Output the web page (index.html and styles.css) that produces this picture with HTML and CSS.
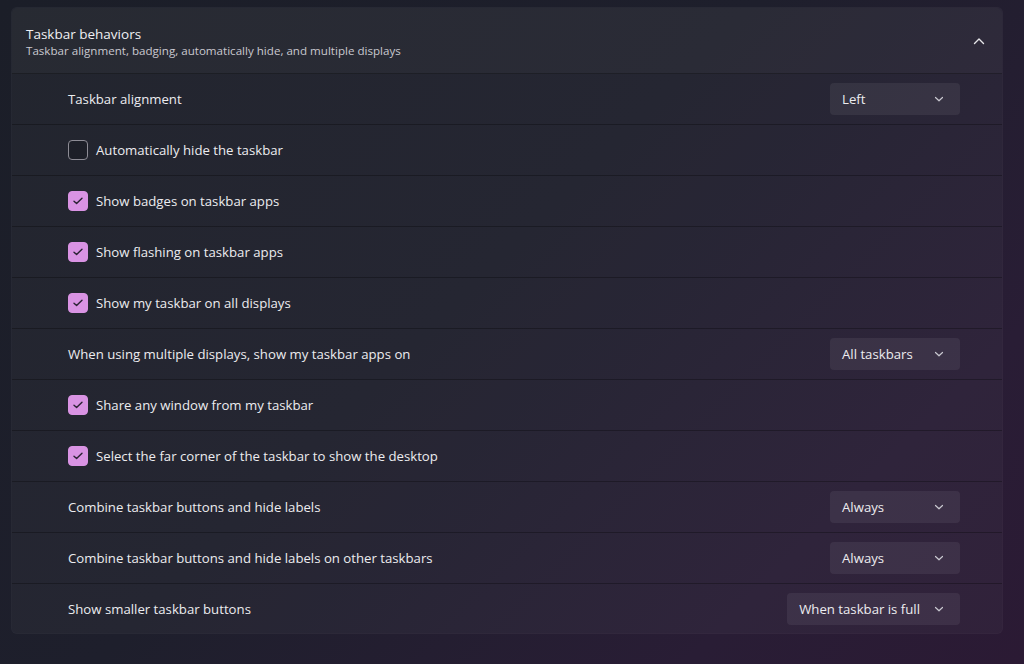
FILE: index.html
```html
<!DOCTYPE html>
<html>
<head>
<meta charset="utf-8">
<link rel="stylesheet" href="styles.css">
</head>
<body>
<div class="page">
  <section class="card">
    <header class="card-head">
      <div class="head-text">
        <div class="title">Taskbar behaviors</div>
        <div class="subtitle">Taskbar alignment, badging, automatically hide, and multiple displays</div>
      </div>
      <svg class="chev-up" width="12" height="8" viewBox="0 0 12 8"><path d="M1.5 6.5 L6 2 L10.5 6.5" fill="none" stroke="#e6e6e9" stroke-width="1.4" stroke-linecap="round" stroke-linejoin="round"/></svg>
    </header>

    <div class="row">
      <span class="label">Taskbar alignment</span>
      <div class="select"><span>Left</span><svg class="chev" width="10" height="6" viewBox="0 0 10 6"><path d="M1.5 1.5 L5 4.8 L8.5 1.5" fill="none" stroke="#c9c8d0" stroke-width="1.2" stroke-linecap="round" stroke-linejoin="round"/></svg></div>
    </div>
    <div class="row">
      <span class="box"></span><span class="label">Automatically hide the taskbar</span>
    </div>
    <div class="row">
      <span class="box on"><svg width="12" height="10" viewBox="0 0 12 10"><path d="M2 5.2 L4.6 7.6 L10 2.2" fill="none" stroke="#2a2233" stroke-width="1.4" stroke-linecap="round" stroke-linejoin="round"/></svg></span><span class="label">Show badges on taskbar apps</span>
    </div>
    <div class="row">
      <span class="box on"><svg width="12" height="10" viewBox="0 0 12 10"><path d="M2 5.2 L4.6 7.6 L10 2.2" fill="none" stroke="#2a2233" stroke-width="1.4" stroke-linecap="round" stroke-linejoin="round"/></svg></span><span class="label">Show flashing on taskbar apps</span>
    </div>
    <div class="row">
      <span class="box on"><svg width="12" height="10" viewBox="0 0 12 10"><path d="M2 5.2 L4.6 7.6 L10 2.2" fill="none" stroke="#2a2233" stroke-width="1.4" stroke-linecap="round" stroke-linejoin="round"/></svg></span><span class="label">Show my taskbar on all displays</span>
    </div>
    <div class="row">
      <span class="label">When using multiple displays, show my taskbar apps on</span>
      <div class="select"><span>All taskbars</span><svg class="chev" width="10" height="6" viewBox="0 0 10 6"><path d="M1.5 1.5 L5 4.8 L8.5 1.5" fill="none" stroke="#c9c8d0" stroke-width="1.2" stroke-linecap="round" stroke-linejoin="round"/></svg></div>
    </div>
    <div class="row">
      <span class="box on"><svg width="12" height="10" viewBox="0 0 12 10"><path d="M2 5.2 L4.6 7.6 L10 2.2" fill="none" stroke="#2a2233" stroke-width="1.4" stroke-linecap="round" stroke-linejoin="round"/></svg></span><span class="label">Share any window from my taskbar</span>
    </div>
    <div class="row">
      <span class="box on"><svg width="12" height="10" viewBox="0 0 12 10"><path d="M2 5.2 L4.6 7.6 L10 2.2" fill="none" stroke="#2a2233" stroke-width="1.4" stroke-linecap="round" stroke-linejoin="round"/></svg></span><span class="label">Select the far corner of the taskbar to show the desktop</span>
    </div>
    <div class="row">
      <span class="label">Combine taskbar buttons and hide labels</span>
      <div class="select"><span>Always</span><svg class="chev" width="10" height="6" viewBox="0 0 10 6"><path d="M1.5 1.5 L5 4.8 L8.5 1.5" fill="none" stroke="#c9c8d0" stroke-width="1.2" stroke-linecap="round" stroke-linejoin="round"/></svg></div>
    </div>
    <div class="row">
      <span class="label">Combine taskbar buttons and hide labels on other taskbars</span>
      <div class="select"><span>Always</span><svg class="chev" width="10" height="6" viewBox="0 0 10 6"><path d="M1.5 1.5 L5 4.8 L8.5 1.5" fill="none" stroke="#c9c8d0" stroke-width="1.2" stroke-linecap="round" stroke-linejoin="round"/></svg></div>
    </div>
    <div class="row last">
      <span class="label">Show smaller taskbar buttons</span>
      <div class="select"><span>When taskbar is full</span><svg class="chev" width="10" height="6" viewBox="0 0 10 6"><path d="M1.5 1.5 L5 4.8 L8.5 1.5" fill="none" stroke="#c9c8d0" stroke-width="1.2" stroke-linecap="round" stroke-linejoin="round"/></svg></div>
    </div>
  </section>
</div>
</body>
</html>
```
FILE: styles.css
```css
* { box-sizing: border-box; }
html, body { margin: 0; height: 100%; }
body {
  width: 1024px;
  height: 664px;
  overflow: hidden;
  font-family: "Open Sans", "Noto Sans", sans-serif;
  color: #ececef;
  background: linear-gradient(135deg, #1b1e28 0%, #1e1f2c 45%, #291d35 80%, #2b1a34 100%);
}
.page {
  padding: 7px 21px 0 11px;
}
.card {
  width: 992px;
  border-radius: 6px;
  overflow: hidden;
  background: rgba(255,255,255,0.03);
  border: 1px solid rgba(255,255,255,0.02);
}
.card-head {
  height: 66px;
  display: flex;
  align-items: center;
  justify-content: space-between;
  padding: 0 17px 0 14px;
  background: rgba(255,255,255,0.025);
  border-bottom: 1px solid rgba(0,0,0,0.28);
}
.head-text { padding-top: 1px; }
.title {
  font-size: 13.5px;
  line-height: 18px;
  color: #f0f0f3;
}
.subtitle {
  font-size: 11.6px;
  line-height: 15px;
  color: #c8c8cf;
}
.chev-up { margin-top: 0; }
.row {
  height: 51px;
  display: flex;
  align-items: center;
  padding: 0 42px 0 56px;
  border-bottom: 1px solid rgba(0,0,0,0.28);
}
.row.last { height: 49px; border-bottom: none; }
.label {
  font-size: 13.2px;
  color: #ececef;
  flex: 1;
}
.box {
  width: 20px;
  height: 20px;
  border-radius: 4px;
  border: 1px solid #8d8c95;
  background: rgba(0,0,0,0.15);
  margin-right: 8px;
  display: flex;
  align-items: center;
  justify-content: center;
  flex: none;
}
.box.on {
  background: #d993e3;
  border-color: #d993e3;
}
.select {
  min-width: 130px;
  height: 32px;
  border-radius: 4px;
  background: rgba(255,255,255,0.065);
  display: flex;
  align-items: center;
  justify-content: space-between;
  padding: 0 16px 0 12px;
  font-size: 13.2px;
  color: #ececef;
  gap: 14px;
}
.chev { flex: none; }
```
